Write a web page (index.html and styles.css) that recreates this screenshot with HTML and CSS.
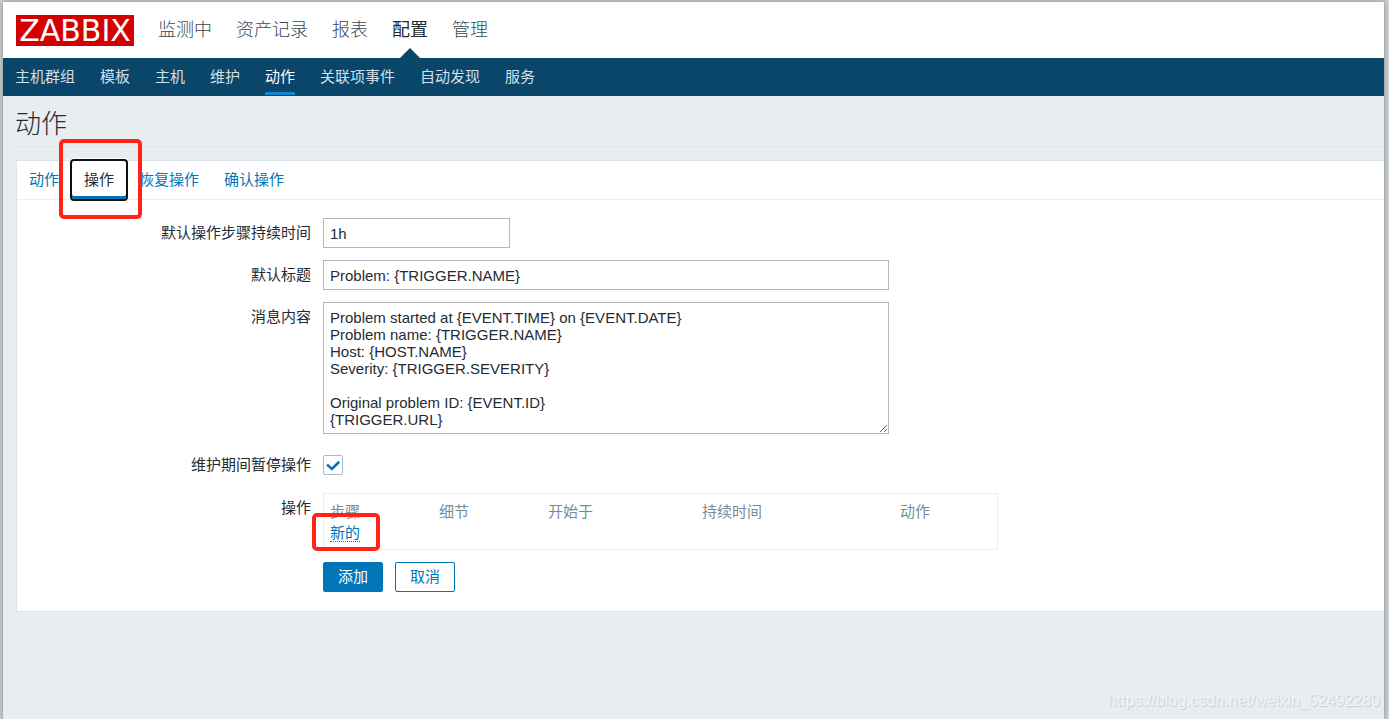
FILE: index.html
```html
<!DOCTYPE html>
<html lang="zh-CN">
<head>
<meta charset="utf-8">
<title>动作</title>
<link rel="stylesheet" href="styles.css">
</head>
<body>
<div class="page">
  <header class="top">
    <a class="logo" href="#">ZABBIX</a>
    <nav class="main-nav">
      <a href="#">监测中</a>
      <a href="#">资产记录</a>
      <a href="#">报表</a>
      <a class="selected" href="#">配置</a>
      <a href="#">管理</a>
    </nav>
  </header>
  <nav class="sub-nav">
    <a href="#">主机群组</a>
    <a href="#">模板</a>
    <a href="#">主机</a>
    <a href="#">维护</a>
    <a class="selected" href="#">动作</a>
    <a href="#">关联项事件</a>
    <a href="#">自动发现</a>
    <a href="#">服务</a>
  </nav>
  <main class="content">
    <h1 class="title">动作</h1>
    <form class="panel">
      <div class="tabs">
        <a class="tab" href="#">动作</a>
        <div class="marked">
          <a class="tab active" href="#">操作</a>
          <span class="mark mark-tab"></span>
        </div>
        <a class="tab" href="#">恢复操作</a>
        <a class="tab" href="#">确认操作</a>
      </div>
      <div class="fields">
        <label class="label" for="duration">默认操作步骤持续时间</label>
        <div class="field"><input class="text short" id="duration" type="text" value="1h"></div>

        <label class="label" for="subject">默认标题</label>
        <div class="field"><input class="text long" id="subject" type="text" value="Problem: {TRIGGER.NAME}"></div>

        <label class="label" for="message">消息内容</label>
        <div class="field"><textarea class="text long message" id="message" rows="7">Problem started at {EVENT.TIME} on {EVENT.DATE}
Problem name: {TRIGGER.NAME}
Host: {HOST.NAME}
Severity: {TRIGGER.SEVERITY}

Original problem ID: {EVENT.ID}
{TRIGGER.URL}</textarea></div>

        <label class="label pause" for="pause">维护期间暂停操作</label>
        <div class="field pause">
          <span class="check">
            <input id="pause" type="checkbox" checked>
            <svg viewBox="0 0 20 20" aria-hidden="true"><path d="M4.1 9.6 8.9 14 16.2 6.8" fill="none" stroke="#0275b8" stroke-width="2.6"/></svg>
          </span>
        </div>

        <span class="label">操作</span>
        <div class="field">
          <div class="box">
            <table class="steps">
              <thead>
                <tr><th class="c1">步骤</th><th class="c1">细节</th><th class="c2">开始于</th><th class="c3">持续时间</th><th>动作</th></tr>
              </thead>
              <tbody>
                <tr><td colspan="5"><span class="marked"><a class="new" href="#">新的</a><span class="mark mark-new"></span></span></td></tr>
              </tbody>
            </table>
          </div>
        </div>

        <div class="field actions">
          <button class="btn primary" type="button">添加</button>
          <button class="btn" type="button">取消</button>
        </div>
      </div>
    </form>
  </main>
  <div class="watermark">https://blog.csdn.net/weixin_52492280</div>
</div>
</body>
</html>
```
FILE: styles.css
```css
* { box-sizing: border-box; }

body {
  margin: 0;
  background: #d3d7da;
  color: #1f2c33;
  font: 15px/20px "Liberation Sans", "Noto Sans CJK SC", sans-serif;
}

a { color: #0275b8; text-decoration: none; }

.page {
  position: relative;
  min-height: calc(100vh - 2px);
  margin: 2px 5px 0 3px;
  background: #e9edf0;
  box-shadow: 0 0 5px 1px #8d9296;
}

.top {
  display: flex;
  align-items: center;
  gap: 24px;
  height: 56px;
  padding: 0 13px;
  background: #fff;
}

.logo {
  width: 118px;
  height: 31px;
  background: #d40000;
  color: #fff;
  font: 30px/31px "DejaVu Sans", sans-serif;
  text-align: center;
}

.main-nav { display: flex; align-self: stretch; gap: 24px; }

.main-nav a {
  position: relative;
  color: #3c4852;
  font-size: 18px;
  font-weight: 300;
  line-height: 56px;
}

.main-nav .selected { color: #1f2c33; font-weight: 400; }

.main-nav .selected::after {
  content: "";
  position: absolute;
  bottom: 0;
  left: 50%;
  margin-left: -10px;
  border: 10px solid transparent;
  border-top: 0;
  border-bottom-color: #0a466a;
}

.sub-nav {
  display: flex;
  gap: 25px;
  height: 38px;
  padding: 0 12px;
  background: #0a466a;
}

.sub-nav a {
  height: 37px;
  border-bottom: 3px solid transparent;
  color: #d3e0e8;
  line-height: 37px;
}

.sub-nav .selected { border-color: #0f85d0; color: #fff; }

.content { padding-left: 12px; }

.title {
  height: 51px;
  margin: 0 0 13px;
  border-bottom: 1px solid #dfe4e7;
  font-size: 26px;
  font-weight: 300;
  line-height: 56px;
}

.panel {
  margin-left: 1px;
  border: 1px solid #dfe4e7;
  border-right: 0;
  background: #fff;
}

.tabs {
  display: flex;
  gap: 1px;
  height: 39px;
  border-bottom: 1px solid #ebeef0;
}

.tab { display: block; height: 38px; padding: 0 12px; line-height: 37px; }

.active {
  border-radius: 2px;
  outline: 2px solid #101010;
  background: #fff;
  box-shadow: inset 0 -3px #0275b8, 0 0 0 3px #fff;
  color: #1f2c33;
}

.marked { position: relative; }

.mark {
  position: absolute;
  z-index: 1;
  border: 4px solid #ff2318;
  border-radius: 5px;
  pointer-events: none;
}

.mark-tab { top: -22px; left: -13px; width: 83px; height: 80px; }
.mark-new { top: -11px; left: -18px; width: 68px; height: 38px; }

.fields {
  display: grid;
  grid-template-columns: 294px minmax(0, 1fr);
  gap: 12px;
  padding: 18px 12px 19px 0;
}

.label { line-height: 29px; text-align: right; }

.field { display: flex; }

.text {
  height: 30px;
  padding: 0 6px;
  border: 1px solid #acbbc2;
  border-radius: 0;
  background: #fff;
  color: #1f2c33;
  font: inherit;
}

.short { width: 187px; }
.long { width: 566px; max-width: 100%; }

.message {
  height: 132px;
  padding: 6px;
  line-height: 17px;
  resize: both;
}

.pause { min-height: 32px; margin-top: 3px; align-items: center; }
.label.pause { line-height: 32px; }

.check { position: relative; width: 20px; height: 20px; }

.check input {
  display: block;
  width: 20px;
  height: 20px;
  margin: 0;
  border: 1px solid #acbbc2;
  border-radius: 2px;
  background: #fff;
  appearance: none;
}

.check svg { position: absolute; inset: 0; pointer-events: none; }

.box {
  width: 675px;
  max-width: 100%;
  padding: 7px 0 6px;
  border: 1px solid #ebeef0;
}

.steps { width: 100%; border-collapse: collapse; table-layout: fixed; }

.steps th,
.steps td { padding: 0 6px; line-height: 21px; text-align: left; }

.steps th { color: #768d99; font-weight: 400; }

.c1 { width: 109px; }
.c2 { width: 154px; }
.c3 { width: 198px; }

.new { border-bottom: 1px dotted #0275b8; }

.actions { grid-column: 2; gap: 12px; }

.btn {
  width: 60px;
  height: 30px;
  padding: 0;
  border: 1px solid #0275b8;
  border-radius: 2px;
  background: #fff;
  color: #0275b8;
  font: inherit;
}

.primary { background: #0275b8; color: #fff; }

.watermark {
  position: absolute;
  right: 4px;
  bottom: 8px;
  color: #f1f4f5;
  font-size: 16px;
  text-shadow: 1px 1px 1px #c6cacd;
}
```
